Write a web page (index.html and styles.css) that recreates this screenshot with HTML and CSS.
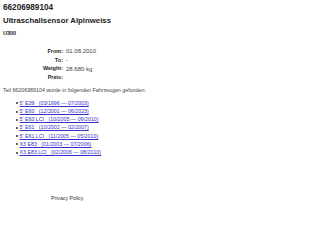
FILE: index.html
```html
<!DOCTYPE html>
<html lang="de">
<head>
  <meta charset="UTF-8" />
  <title>66206989104 Ultraschallsensor Alpinweiss</title>
  <link rel="stylesheet" href="styles.css">
</head>
<body>
  <div class="page">
    <h1 class="part-no">66206989104</h1>
    <h2 class="part-name">Ultraschallsensor Alpinweiss</h2>
    <h3 class="part-code">U300</h3>

    <table class="details">
      <tr><th>From:</th><td>01.08.2010</td></tr>
      <tr><th>To:</th><td>-</td></tr>
      <tr><th>Weight:</th><td>28.680 kg</td></tr>
      <tr><th>Preis:</th><td></td></tr>
    </table>

    <p class="found">Teil 66206989104 wurde in folgenden Fahrzeugen gefunden:</p>

    <ul class="cars">
      <li><a href="#">5' E39 &nbsp;&nbsp;(03/1996 &mdash; 07/2003)</a></li>
      <li><a href="#">5' E60 &nbsp;&nbsp;(12/2001 &mdash; 06/2023)</a></li>
      <li><a href="#">5' E60 LCI &nbsp;&nbsp;(10/2005 &mdash; 09/2010)</a></li>
      <li><a href="#">5' E61 &nbsp;&nbsp;(10/2002 &mdash; 02/2007)</a></li>
      <li><a href="#">5' E61 LCI &nbsp;&nbsp;(11/2005 &mdash; 05/2010)</a></li>
      <li><a href="#">X3 E83 &nbsp;&nbsp;(01/2003 &mdash; 07/2006)</a></li>
      <li><a href="#">X3 E83 LCI &nbsp;&nbsp;(02/2006 &mdash; 08/2010)</a></li>
    </ul>

    <div class="footer">Privacy Policy</div>
  </div>
</body>
</html>
```

FILE: styles.css
```css
* {
  box-sizing: border-box;
}
html, body {
  margin: 0;
  padding: 0;
  background: #fff;
  color: #222;
  font-family: "Liberation Sans", Arial, sans-serif;
}
.page {
  padding: 2px 3px;
  font-size: 5.3px;
}
.part-no {
  margin: 0;
  font-size: 8.2px;
  line-height: 12px;
}
.part-name {
  margin: 1px 0 0 0;
  font-size: 7.8px;
  line-height: 12px;
}
.part-code {
  margin: 2px 0 0 0;
  font-size: 5.5px;
  line-height: 8px;
}
.details {
  margin: 10px 0 0 0;
  border-collapse: collapse;
  font-size: 5.5px;
}
.details th {
  width: 63px;
  padding: 0 3px 0 0;
  text-align: right;
  line-height: 8.7px;
}
.details td {
  padding: 0;
  color: #444;
  font-size: 6px;
}
.found {
  margin: 4px 0 0 0;
  font-size: 5.3px;
  line-height: 8px;
  color: #444;
}
.cars {
  margin: 5px 0 0 0;
  padding: 0 0 0 13px;
  list-style: none;
  font-size: 5.3px;
  line-height: 8.2px;
}
.cars li::before {
  content: "";
  display: inline-block;
  width: 2px;
  height: 2px;
  margin-right: 1.5px;
  vertical-align: middle;
  background: #333;
  border-radius: 1px;
}
.cars a {
  color: #33c;
}
.footer {
  margin-top: 39px;
  padding-left: 48px;
  font-size: 5.2px;
  color: #333;
}
```
